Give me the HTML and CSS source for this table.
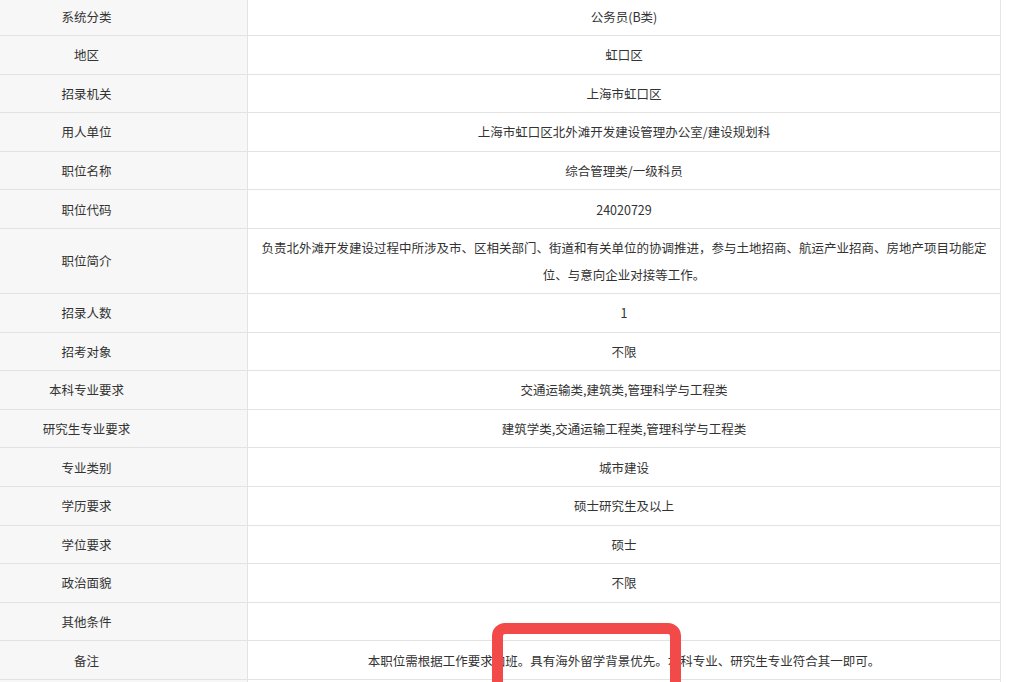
FILE: index.html
```html
<!DOCTYPE html>
<html lang="zh-CN">
<head>
<meta charset="utf-8">
<title>职位详情</title>
<link rel="stylesheet" href="styles.css">
</head>
<body>
<div class="page">
  <div class="table">
    <div class="row"><div class="label">系统分类</div><div class="value">公务员(B类)</div></div>
    <div class="row"><div class="label">地区</div><div class="value">虹口区</div></div>
    <div class="row"><div class="label">招录机关</div><div class="value">上海市虹口区</div></div>
    <div class="row"><div class="label">用人单位</div><div class="value">上海市虹口区北外滩开发建设管理办公室/建设规划科</div></div>
    <div class="row"><div class="label">职位名称</div><div class="value">综合管理类/一级科员</div></div>
    <div class="row"><div class="label">职位代码</div><div class="value">24020729</div></div>
    <div class="row tall"><div class="label">职位简介</div><div class="value">负责北外滩开发建设过程中所涉及市、区相关部门、街道和有关单位的协调推进，参与土地招商、航运产业招商、房地产项目功能定位、与意向企业对接等工作。</div></div>
    <div class="row"><div class="label">招录人数</div><div class="value">1</div></div>
    <div class="row"><div class="label">招考对象</div><div class="value">不限</div></div>
    <div class="row"><div class="label">本科专业要求</div><div class="value">交通运输类,建筑类,管理科学与工程类</div></div>
    <div class="row"><div class="label">研究生专业要求</div><div class="value">建筑学类,交通运输工程类,管理科学与工程类</div></div>
    <div class="row"><div class="label">专业类别</div><div class="value">城市建设</div></div>
    <div class="row"><div class="label">学历要求</div><div class="value">硕士研究生及以上</div></div>
    <div class="row"><div class="label">学位要求</div><div class="value">硕士</div></div>
    <div class="row"><div class="label">政治面貌</div><div class="value">不限</div></div>
    <div class="row"><div class="label">其他条件</div><div class="value"></div></div>
    <div class="row"><div class="label">备注</div><div class="value">本职位需根据工作要求加班。具有海外留学背景优先。本科专业、研究生专业符合其一即可。</div></div>
    <div class="row"><div class="label"></div><div class="value"></div></div>
  </div>
  <div class="highlight"></div>
</div>
</body>
</html>
```

FILE: styles.css
```css
html, body {
  margin: 0;
  padding: 0;
  background: #ffffff;
  overflow: hidden;
}

.page {
  position: relative;
  width: 1013px;
  height: 682px;
  overflow: hidden;
  font-family: "Noto Sans CJK SC", "Noto Sans", sans-serif;
  font-size: 12.5px;
  color: #333333;
}

.table {
  width: 1074px;
  margin-top: -2.6px;
  margin-left: -74px;
  border-right: 1px solid #e6e6e6;
}

.row {
  display: grid;
  grid-template-columns: 322px 1fr;
  height: 38.6px;
  box-sizing: border-box;
  border-bottom: 1px solid #e3e3e3;
}

.row.tall {
  height: 65px;
}

.label {
  background: #f7f7f7;
  border-right: 1px solid #e3e3e3;
  display: flex;
  align-items: center;
  justify-content: center;
}

.value {
  display: flex;
  align-items: center;
  justify-content: center;
  text-align: center;
  padding: 0 10px;
  line-height: 27px;
}

.highlight {
  position: absolute;
  left: 492px;
  top: 623px;
  width: 189px;
  height: 90px;
  box-sizing: border-box;
  border: 11px solid #f24a48;
  border-radius: 13px;
}
```
